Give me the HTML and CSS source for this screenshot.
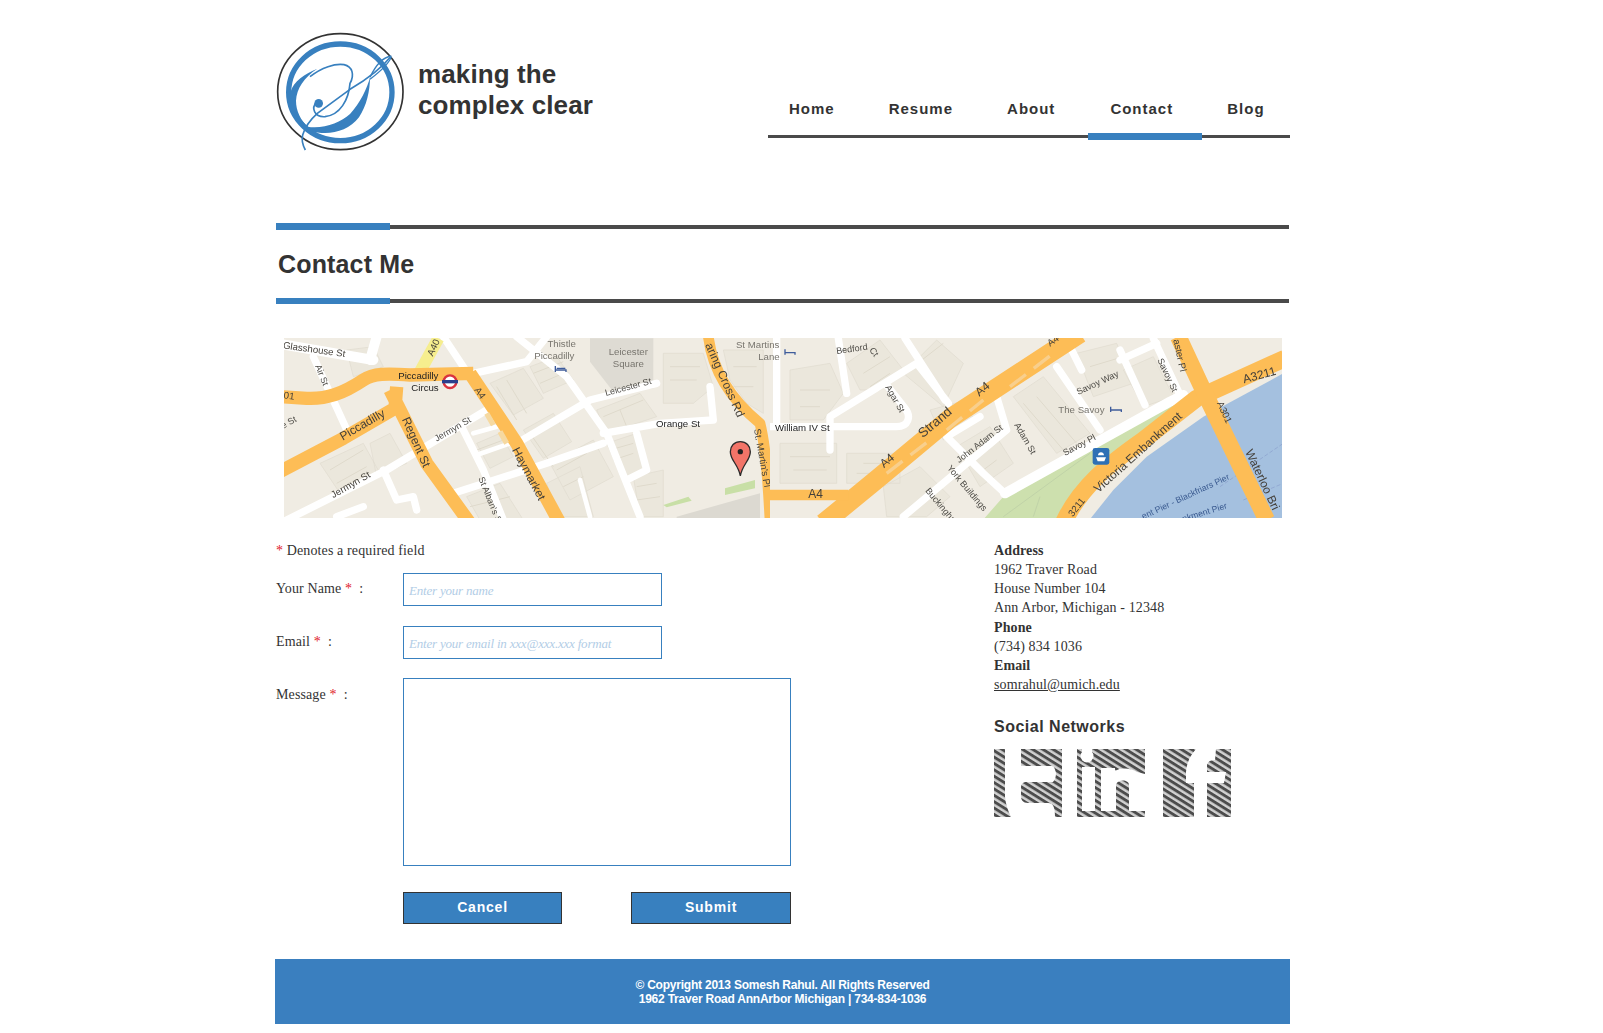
FILE: index.html
```html
<!DOCTYPE html>
<html lang="en">
<head>
<meta charset="utf-8">
<title>Contact Me</title>
<link rel="stylesheet" href="styles.css">
</head>
<body>
<div class="page">
  <header class="header">
    <div class="brand">
      <svg class="logo" viewBox="45 30 405 390" aria-hidden="true">
        <ellipse cx="241" cy="215" rx="188" ry="174" fill="none" stroke="#333" stroke-width="5"/>
        <ellipse cx="241" cy="217" rx="155" ry="145" fill="none" stroke="#3880bf" stroke-width="16"/>
        <path fill="#3880bf" d="M92 215C100 185 135 160 172 146C132 172 110 205 108 242C108 272 122 302 146 322C112 308 90 268 90 232Z"/>
        <path fill="none" stroke="#3880bf" stroke-width="5" d="M150 170C185 142 225 130 252 134C278 140 284 165 270 190C266 240 240 285 195 290C165 292 150 265 172 245"/>
        <circle cx="176" cy="250" r="13" fill="#3880bf"/>
        <path fill="none" stroke="#3880bf" stroke-width="5" d="M392 110C360 150 320 178 270 208L172 280C150 300 135 320 128 345C124 360 128 375 136 390"/>
        <path fill="none" stroke="#3880bf" stroke-width="4" d="M394 108C365 112 345 140 330 172M394 110C388 130 360 155 330 178"/>
        <path fill="#3880bf" d="M330 172C322 205 300 250 270 282C240 308 190 328 142 320L150 332C200 348 262 338 297 292C320 258 330 212 330 172Z"/>
      </svg>
      <div class="tagline">making the<br>complex clear</div>
    </div>
    <nav class="nav">
      <a class="nav-link nav-home" href="#">Home</a>
      <a class="nav-link" href="#">Resume</a>
      <a class="nav-link nav-about" href="#">About</a>
      <a class="nav-link nav-active" href="#">Contact</a>
      <a class="nav-link nav-blog" href="#">Blog</a>
    </nav>
  </header>

  <div class="title-band">
    <h1 class="title">Contact Me</h1>
  </div>

  <svg class="map" viewBox="0 0 998 180" role="img" aria-label="Map of central London">
    <defs>
      <clipPath id="leftClip"><rect x="0" y="0" width="486" height="180"/></clipPath>
      <clipPath id="rightClip"><rect x="486" y="0" width="512" height="180"/></clipPath>
    </defs>
    <rect width="998" height="180" fill="#f0ece3"/>

    <g clip-path="url(#leftClip)"><g transform="translate(-14 -8) scale(.33333)">
      <path class="blocks" d="M660 160l100-45 60 90-90 50zM760 300l90-50 55 85-85 50zM620 340l70-30 40 70-70 35zM840 400l130-70 60 110-130 70zM590 500l100-40 70 110-130 0zM300 340l60-30 50 90-90 40zM150 400l130-60 50 90-120 60zM980 240l130-50 50 70-150 50zM1180 70h120l30 100-60 50h-90zM1360 60h120v190l-50-30-50-70zM1010 340l90-30 30 110-70 30zM830 460l100-50 40 150H860zM1090 440l90-20 0 140h-70zM780 110l80-30 50 70-90 40zM230 60l80-10 30 60-90 30z"/>
      <path class="lines" d="M680 170l60 100M710 150l60 100M780 310l70 100M620 360l80-30M860 420l90-50M880 470l60-30M1000 260l120-50M1050 240l20 50M1200 110h90M1200 150h80M1390 110h70M1390 170h60M180 420l100-60M200 460l90-50M790 130l90-35M810 160l70-30M1020 360l70-20M1030 390l60-20M1100 470l60-10M1100 510l70-10M600 530l120-30"/>
      <path d="M960 25h190v150l-120 10-70-90z" fill="#dedbd3"/>
      <path d="M1220 560l250-70v80h-250z" fill="#dcd9d1"/>
      <path d="M1180 525l75-25 10 12-75 20zM1365 475l90-25 0 25-90 20z" fill="#c8dfa6"/>
      <path class="wroad w30" d="M20 40L310 90M300 90L320 20"/>
      <path class="wroad w22" d="M130 80L240 320M520 20L600 140M740 20L890 140L1010 310L1110 560M610 130L770 95L830 20M30 580L350 420L650 240M740 340L960 210L1160 160M1000 310L1170 280L1330 270L1320 170M575 290L640 420L700 570M550 490L830 400L1000 340M1100 310L1130 420L1070 450M340 420L380 510L430 500L440 540M200 560L280 530"/>
      <path class="wroad w14" d="M610 310L680 290M620 375L720 340M930 450L960 560"/>
      <path class="yellow" d="M450 125L505 25"/>
      <path class="oroad" d="M30 200L110 205C170 208 220 190 280 150C310 130 350 130 420 135L610 130M30 425L220 325L375 235L380 170M360 180L470 400L600 580M600 130L740 340L870 580"/>
      <path class="oroad o28" d="M1315 20C1325 100 1360 190 1470 280C1490 360 1495 480 1500 570M1490 505L1570 495"/>
      <path d="M650 250l20 35M690 305l20 35" stroke="#f6d9a0" stroke-width="16" fill="none"/>
      <circle cx="540" cy="155" r="19" fill="#fff" stroke="#d9333f" stroke-width="7"/>
      <rect x="516" y="150" width="48" height="10" fill="#2b3f8c"/>
      <g class="hotel"><path d="M856 108v18M856 120h32v6M860 115h26"/></g>
      <g class="lbl">
        <text transform="translate(38 55) rotate(8)">Glasshouse St</text>
        <text transform="translate(135 108) rotate(68)" class="sm">Air St</text>
        <text transform="translate(488 80) rotate(-65)">A40</text>
        <text x="875" y="52" class="grey mid">Thistle</text>
        <text x="853" y="88" class="grey mid">Piccadilly</text>
        <text x="1075" y="75" class="grey mid">Leicester</text>
        <text x="1075" y="110" class="grey mid">Square</text>
        <text x="445" y="148" class="dark mid">Piccadilly</text>
        <text x="465" y="182" class="dark mid">Circus</text>
        <text transform="translate(40 205) rotate(8)">01</text>
        <text transform="translate(218 332) rotate(-30)" class="lg">Piccadilly</text>
        <text transform="translate(395 268) rotate(66)" class="lg">Regent St</text>
        <text transform="translate(612 180) rotate(55)">A4</text>
        <text transform="translate(1008 198) rotate(-15)" class="sm">Leicester St</text>
        <text transform="translate(500 335) rotate(-30)" class="sm">Jermyn St</text>
        <text transform="translate(190 505) rotate(-30)">Jermyn St</text>
        <text transform="translate(725 360) rotate(62)" class="lg">Haymarket</text>
        <text transform="translate(1305 45) rotate(66)" class="lg">aring Cross Rd</text>
        <text x="1158" y="290" class="dark">Orange St</text>
        <text transform="translate(1452 298) rotate(80)">St. Martin's Pl</text>
        <text transform="translate(625 445) rotate(68)" class="sm">St Alban's S</text>
        <text transform="translate(40 297) rotate(-30)" class="sm">e St</text>
      </g>
      <path d="M1411 335c-18 0-30 13-30 30 0 26 24 38 30 73 6-35 30-47 30-73 0-17-12-30-30-30z" fill="#f27468" stroke="#2b2b2b" stroke-width="4"/>
      <circle cx="1411" cy="365" r="8" fill="#222"/>
    </g></g>

    <g clip-path="url(#rightClip)"><g transform="translate(486 -8) scale(.33333)">
      <path class="blocks" d="M60 120l120-20 40 90-60 80H60zM230 100L330 30l70 90-70 60-60 0zM400 130l100-100 80 70-60 130zM480 240l110-30 20 60-90 60zM230 370h160v90H230zM560 350l100-60 70 110-100 70zM730 200l90-60 140 170-100 60zM920 70l120-30 50 120-120 40zM1060 120l90-40 60 120-90 30zM30 340h170v120H30zM340 470l110-60 90 90-70 60h-120z"/>
      <path class="lines" d="M90 180h90M90 230h60M280 130l80-50M300 170l60-40M430 110l90-70M760 220l120 140M800 200l120 140M960 110l100-30M600 370l70-40M640 420l40-30M280 400h80M260 430h100M60 380h120M70 420h100"/>
      <path class="water" d="M950 580L1030 480L1130 380L1300 260L1540 130V580Z"/>
      <path class="park" d="M630 580L700 500L960 340L1190 230L1220 222L1040 395L880 580Z"/>
      <path d="M880 560L1000 400M700 560L960 370M790 560L810 500" stroke="#b9cba4" stroke-width="2" fill="none"/>
      <path d="M1350 470l190-130M1420 510l120-50" stroke="#8a9fcc" stroke-width="2" stroke-dasharray="12 6" fill="none"/>
      <path class="wroad w22" d="M20 20V280M-10 290H380C415 290 425 260 405 235L350 165M180 360V260L440 100L535 220M205 25L230 190M405 25L525 210M1050 60L1125 225M1150 25L1235 205M1050 90L1160 40M530 320L630 260M530 320L640 430L705 490M400 560L710 300L680 200M860 110L990 300M900 50L935 120"/>
      <path class="wroad w30" d="M705 490L1200 215L1240 195"/>
      <path class="oroad o60" d="M160 580L330 440L540 265L930 10"/>
      <path class="oroad o28" d="M-10 495H235"/>
      <path class="oroad o46" d="M880 580C930 470 1020 400 1120 330L1280 205L1545 85"/>
      <path class="oroad o50" d="M1225 20L1295 170L1490 570"/>
      <path d="M350 430l130-100M530 300l110-90M720 170l130-100" stroke="#f8cf8d" stroke-width="10" fill="none" stroke-dasharray="60 30"/>
      <rect x="968" y="354" width="50" height="50" rx="7" fill="#2d70b5"/>
      <path d="M978 382h30l-5 12h-20zM984 376c0-12 18-12 18 0z" fill="#fff"/>
      <path d="M45 58v16M45 68h30v6" stroke="#3f5c9b" stroke-width="4" fill="none"/>
      <path d="M1022 230v16M1022 240h32v6" stroke="#3f5c9b" stroke-width="4" fill="none"/>
      <g class="lbl">
        <text transform="translate(200 72) rotate(-8)" class="sm">Bedford</text>
        <text transform="translate(297 60) rotate(55)" class="sm">Ct</text>
        <text transform="translate(345 172) rotate(60)" class="sm">Agar St</text>
        <text x="15" y="302" class="dark">William IV St</text>
        <text transform="translate(458 325) rotate(-40)" class="xl">Strand</text>
        <text transform="translate(628 200) rotate(-40)" class="lg">A4</text>
        <text transform="translate(342 415) rotate(-40)" class="lg">A4</text>
        <text x="115" y="503" class="lg">A4</text>
        <text transform="translate(840 50) rotate(-35)">A4</text>
        <text transform="translate(1210 30) rotate(78)">aster Pl</text>
        <text transform="translate(925 195) rotate(-25)" class="sm">Savoy Way</text>
        <text x="865" y="248" class="grey">The Savoy</text>
        <text transform="translate(1162 90) rotate(65)" class="sm">Savoy St</text>
        <text transform="translate(732 285) rotate(60)" class="sm">Adam St</text>
        <text transform="translate(568 400) rotate(-38)" class="sm">John Adam St</text>
        <text transform="translate(530 415) rotate(50)" class="sm">York Buildings</text>
        <text transform="translate(465 483) rotate(50)" class="sm">Buckingha</text>
        <text transform="translate(885 378) rotate(-28)" class="sm">Savoy Pl</text>
        <text transform="translate(985 490) rotate(-42)" class="lg">Victoria Embankment</text>
        <text transform="translate(908 562) rotate(-52)">3211</text>
        <text transform="translate(1422 160) rotate(-15)" class="lg">A3211</text>
        <text transform="translate(1340 220) rotate(65)">A301</text>
        <text transform="translate(1425 365) rotate(65)" class="lg">Waterloo Bri</text>
        <text transform="translate(1120 568) rotate(-25)" class="sea">ent Pier - Blackfriars Pier</text>
        <text transform="translate(1240 575) rotate(-17)" class="sea">nkment Pier</text>
      </g>
    </g></g>

    <g class="lbl" transform="translate(-14 -8) scale(.33333)">
      <text x="1463" y="55" class="grey mid">St Martins</text>
      <text x="1497" y="90" class="grey mid">Lane</text>
    </g>
  </svg>

  <main class="content">
    <form class="contact-form">
      <p class="required-note"><span class="star">*</span> Denotes a required field</p>
      <div class="field">
        <label class="field-label" for="name">Your Name <span class="star">*</span> &nbsp;:</label>
        <input class="input" id="name" type="text" placeholder="Enter your name">
      </div>
      <div class="field field-email">
        <label class="field-label" for="email">Email <span class="star">*</span> &nbsp;:</label>
        <input class="input" id="email" type="text" placeholder="Enter your email in xxx@xxx.xxx format">
      </div>
      <div class="field">
        <label class="field-label field-label-msg" for="msg">Message <span class="star">*</span> &nbsp;:</label>
        <textarea class="textarea" id="msg"></textarea>
      </div>
      <div class="actions">
        <button class="btn" type="button">Cancel</button>
        <button class="btn btn-submit" type="submit">Submit</button>
      </div>
    </form>
    <aside class="side">
      <address class="info">
        <p class="info-group"><strong>Address</strong><br>
        1962 Traver Road<br>
        House Number 104<br>
        Ann Arbor, Michigan - 12348</p>
        <p class="info-group info-next"><strong>Phone</strong><br>
        (734) 834 1036<br>
        <strong>Email</strong><br>
        <a class="mail" href="#">somrahul@umich.edu</a></p>
      </address>
      <h2 class="social-title">Social Networks</h2>
      <svg class="social" viewBox="0 0 237 68" aria-label="Social network icons">
        <defs>
          <pattern id="stripes" width="5.4" height="5.4" patternUnits="userSpaceOnUse" patternTransform="rotate(32)">
            <rect width="5.4" height="5.4" fill="#d2d2d2"/>
            <rect width="5.4" height="2.9" fill="#4c4c4c"/>
          </pattern>
        </defs>
        <path fill="url(#stripes)" d="M0 0H11V48Q12 58 17 68H0ZM27 0H68V68H61C61 60 60 54 54 54H34C29 54 27 51 27 47V38C27 35 29 33 33 33H59C61 31 62 28 62 24C61 20 60 17 58 17H27Z"/>
        <g transform="translate(83)">
          <rect width="68" height="68" fill="url(#stripes)"/>
          <circle cx="10" cy="7" r="6.5" fill="#fff"/>
          <path fill="#fff" d="M5 0H15V6H5ZM5 18H18V62H5ZM24 19H38V22C44 18 54 19 60 23L68 25V62H52V36C52 30 40 30 39 36V62H24Z"/>
        </g>
        <g transform="translate(169)">
          <path fill="url(#stripes)" d="M0 0H33C28 6 24 12 23 23V34H31V68H0ZM53 0H68V68H44V34H61L63 23H44V17C44 13 47 11 52 11Z"/>
        </g>
      </svg>
    </aside>
  </main>

  <footer class="footer">
    <p>&copy; Copyright 2013 Somesh Rahul. All Rights Reserved</p>
    <p>1962 Traver Road AnnArbor Michigan | 734-834-1036</p>
  </footer>
</div>
</body>
</html>
```
FILE: styles.css
```css
* { box-sizing: border-box; }
html, body { margin: 0; padding: 0; background: #fff; }
body { font-family: "Liberation Serif", "Times New Roman", serif; font-size: 14px; letter-spacing: .12px; color: #333; }
.page { width: 1015px; margin-left: 275px; }

/* header */
.header { display: flex; justify-content: space-between; align-items: flex-end; height: 142px; padding-top: 30px; }
.brand { display: flex; align-items: flex-start; align-self: flex-start; }
.logo { display: block; width: 135px; height: 130px; }
.tagline { margin: 29px 0 0 8px; font: bold 26px/31px "Liberation Sans", Arial, sans-serif; letter-spacing: .12px; color: #333; }
.nav { display: flex; width: 522px; height: 37px; border-bottom: 3px solid #4a4a4a; position: relative; margin-bottom: 4px; }
.nav-link { display: block; position: relative; padding: 0 27px; font: bold 15px/15px "Liberation Sans", Arial, sans-serif; letter-spacing: 1px; color: #333; text-decoration: none; }
.nav-home { padding-left: 21px; }
.nav-about { padding-right: 33px; }
.nav-active { padding: 0 29px 0 22px; }
.nav-active::after { content: ""; position: absolute; top: 32px; left: 0; right: 0; height: 7px; background: #3880bf; }
.nav-blog { padding: 0 0 0 25px; }

/* page title */
.title-band { margin-top: 81px; height: 81px; padding-left: 3px; background-repeat: no-repeat; background-color: #fff;
  background-image: linear-gradient(#3880bf, #3880bf), linear-gradient(#3880bf, #3880bf), linear-gradient(#4a4a4a, #4a4a4a), linear-gradient(#4a4a4a, #4a4a4a);
  background-size: 114px 7px, 114px 6px, calc(100% - 2px) 4px, calc(100% - 2px) 4px;
  background-position: 1px 0, 1px 75px, 1px 2px, 1px 76px; }
.title { margin: 0; padding-top: 25px; font: bold 25px/32px "Liberation Sans", Arial, sans-serif; letter-spacing: .15px; color: #333; }

/* map */
.map { display: block; width: 998px; height: 180px; margin: 34px 0 0 9px; filter: blur(.35px); }
.blocks { fill: #ebe7dc; stroke: #e0dbce; stroke-width: 2; }
.lines { fill: none; stroke: #dfdacc; stroke-width: 3; }
.wroad { fill: none; stroke: #fff; stroke-linecap: round; stroke-linejoin: round; }
.w30 { stroke-width: 30; }
.w22 { stroke-width: 22; }
.w14 { stroke-width: 14; }
.yellow { fill: none; stroke: #f6ee8e; stroke-width: 36; }
.oroad { fill: none; stroke: #fdbd56; stroke-width: 40; stroke-linejoin: round; }
.o28 { stroke-width: 32; }
.o46 { stroke-width: 52; }
.o50 { stroke-width: 50; }
.o60 { stroke-width: 58; }
.water { fill: #a4c0df; }
.park { fill: #cde0ae; }
.hotel path { fill: none; stroke: #3f5c9b; stroke-width: 4; }
.lbl text { font: 29px "Liberation Sans", Arial, sans-serif; letter-spacing: 0; fill: #44403a; }
.lbl .sm { font-size: 27px; fill: #4c4a45; }
.lbl .lg { font-size: 36px; }
.lbl .xl { font-size: 40px; }
.lbl .grey { fill: #78756e; }
.lbl .dark { fill: #222; }
.lbl .sea { font-size: 26px; fill: #3a5a90; }
.lbl .mid { text-anchor: middle; }

/* form + aside */
.content { display: flex; margin-top: 23px; }
.contact-form { width: 719px; }
.required-note { margin: 0 0 13px 1px; line-height: 19px; }
.star { color: #e0202a; }
.field { display: flex; align-items: flex-start; margin-bottom: 20px; }
.field-email { margin-bottom: 19px; }
.field-label { width: 128px; padding: 6px 0 0 1px; line-height: 19px; color: #333; }
.field-label-msg { padding-top: 7px; }
.input { width: 259px; height: 33px; padding: 2px 5px 0; border: 1px solid #3880bf; border-radius: 0; outline: 0; background: #fff; font: 13px "Liberation Serif", serif; letter-spacing: -.2px; }
.input::placeholder { color: #b2cde6; font-style: italic; opacity: 1; }
.textarea { display: block; width: 388px; height: 188px; border: 1px solid #3880bf; border-radius: 0; outline: 0; resize: none; background: #fff; }
.actions { display: flex; gap: 69px; margin: 26px 0 0 128px; }
.btn { width: 159px; height: 32px; padding: 0 0 2px; border: 1px solid #333; border-radius: 0; background: #3880bf; color: #fff; font: bold 14px "Liberation Sans", Arial, sans-serif; letter-spacing: .8px; }
.btn-submit { width: 160px; }

.info { font-style: normal; line-height: 19px; }
.info-group { margin: 0; }
.info-next { margin-top: 1px; }
.info strong { font-weight: bold; }
.mail { color: #333; text-decoration: underline; }
.social-title { margin: 23px 0 0; font: bold 16px/20px "Liberation Sans", Arial, sans-serif; letter-spacing: .5px; color: #333; }
.social { display: block; width: 237px; height: 68px; margin-top: 12px; }

/* footer */
.footer { height: 65px; margin-top: 35px; padding-top: 19px; background: #3a7fbf; color: #fff; text-align: center; font: bold 12px/14px "Liberation Sans", Arial, sans-serif; letter-spacing: -.22px; }
.footer p { margin: 0; }
```
